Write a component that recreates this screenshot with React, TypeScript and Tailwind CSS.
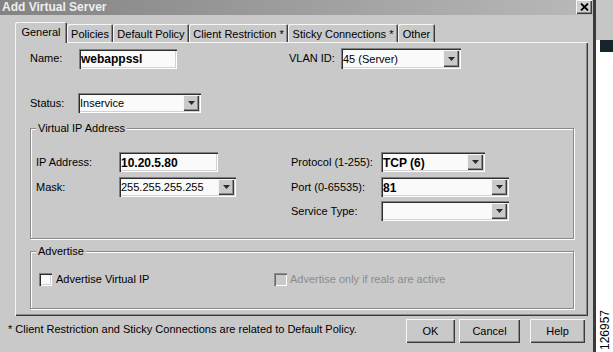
import React from "react";

const sunken =
  "shadow-[inset_1px_1px_0_#808080,inset_2px_2px_0_#2e2e2e,inset_-1px_-1px_0_#ffffff,inset_-2px_-2px_0_#d2d2d2]";
const raised =
  "shadow-[inset_1px_1px_0_#f6f6f6,inset_-1px_-1px_0_#3a3a3a,inset_-2px_-2px_0_#8a8a8a]";

function Arrow() {
  return (
    <div
      className={`w-[16px] h-full flex items-center justify-center bg-[#cacaca] ${raised}`}
    >
      <svg width="7" height="4" viewBox="0 0 7 4">
        <path d="M0 0h7L3.5 4z" fill="#2a2a2a" />
      </svg>
    </div>
  );
}

function TextField({ cls, value }: { cls: string; value: string }) {
  return (
    <div className={`${cls} flex items-center bg-[#fafafa] pl-[2px] pt-[1px] ${sunken}`}>
      <span className="font-bold text-[12px] leading-none">{value}</span>
    </div>
  );
}

function Select({ cls, value, bold }: { cls: string; value: string; bold?: boolean }) {
  return (
    <div className={`${cls} flex items-stretch bg-[#fafafa] p-[2px] ${sunken}`}>
      <div className="flex-1 flex items-center pt-[1px]">
        <span className={bold ? "font-bold text-[12px] leading-none" : "text-[11px] leading-none"}>
          {value}
        </span>
      </div>
      <Arrow />
    </div>
  );
}

function Tab({ label, cls, selected }: { label: string; cls: string; selected?: boolean }) {
  return (
    <div
      className={`${cls} flex justify-center rounded-t-[2px] bg-[#c9c9c9] shadow-[inset_1px_1px_0_#f6f6f6,inset_-1px_0_0_#3a3a3a,inset_-2px_0_0_#8a8a8a] ${
        selected ? "h-[21px] -mb-[1px] relative z-10 pt-[5px]" : "h-[18px] pt-[5px]"
      }`}
    >
      <span className="text-[11px] leading-[11px]">{label}</span>
    </div>
  );
}

function Group({
  legend,
  cls,
  children,
}: {
  legend: string;
  cls: string;
  children: React.ReactNode;
}) {
  return (
    <div
      className={`${cls} relative border border-[#8a8a8a] shadow-[inset_1px_1px_0_#ffffff,1px_1px_0_#ffffff]`}
    >
      <span className="absolute -top-[7px] left-[5px] px-[2px] bg-[#c9c9c9] text-[11px] leading-[13px]">
        {legend}
      </span>
      {children}
    </div>
  );
}

function Check({ disabled }: { disabled?: boolean }) {
  return (
    <div
      className={`w-[13px] h-[13px] ${
        disabled
          ? "bg-[#c9c9c9] shadow-[inset_1px_1px_0_#8a8a8a,inset_2px_2px_0_#6a6a6a,inset_-1px_-1px_0_#ffffff]"
          : `bg-[#fafafa] ${sunken}`
      }`}
    />
  );
}

export default function App() {
  return (
    <div className="w-[613px] h-[352px] flex overflow-hidden bg-white text-black [font-family:'Liberation_Sans',Arial,sans-serif]">
      {/* dialog */}
      <div className="w-[593px] h-full flex flex-col bg-[#c9c9c9]">
        {/* title bar */}
        <div className="h-[15px] flex items-start justify-between bg-linear-to-r from-[#838383] to-[#b9b9b9] pl-[2px] pr-[1px]">
          <span className="font-bold text-[12px] leading-[14px] text-[#eeeeee]">Add Virtual Server</span>
          <div
            className={`w-[16px] h-[14px] flex items-center justify-center bg-[#cfcfcf] ${raised}`}
          >
            <svg width="9" height="8" viewBox="0 0 9 8">
              <path d="M1 0.5L8 7.5M8 0.5L1 7.5" stroke="#000" strokeWidth="1.8" />
            </svg>
          </div>
        </div>

        {/* tabs */}
        <div className="h-[27px] pl-[15px] flex items-end">
          <Tab label="General" cls="w-[52px]" selected />
          <Tab label="Policies" cls="w-[46px]" />
          <Tab label="Default Policy" cls="w-[76px]" />
          <Tab label="Client Restriction *" cls="w-[99px]" />
          <Tab label="Sticky Connections *" cls="w-[110px]" />
          <Tab label="Other" cls="w-[37px]" />
        </div>

        {/* panel */}
        <div
          className={`ml-[15px] w-[573px] h-[274px] flex flex-col text-[11px] shadow-[inset_1px_1px_0_#f6f6f6,inset_-1px_-1px_0_#3a3a3a,inset_-2px_-2px_0_#8a8a8a]`}
        >
          {/* Name / VLAN */}
          <div className="mt-[6px] h-[21px] flex items-center">
            <span className="ml-[15px] w-[49px]">Name:</span>
            <TextField cls="w-[98px] h-[20px]" value="webappssl" />
            <span className="ml-[112px] w-[52px]">VLAN ID:</span>
            <Select cls="w-[120px] h-[21px]" value="45 (Server)" />
          </div>

          {/* Status */}
          <div className="mt-[24px] h-[20px] flex items-center">
            <span className="ml-[15px] w-[48px]">Status:</span>
            <Select cls="w-[123px] h-[20px]" value="Inservice" />
          </div>

          {/* VIP group */}
          <Group legend="Virtual IP Address" cls="mt-[15px] ml-[15px] w-[544px] h-[111px]">
            <div className="flex pt-[23px]">
              <div className="w-[260px] pl-[5px] flex flex-col">
                <div className="h-[20px] flex items-center">
                  <span className="w-[83px]">IP Address:</span>
                  <TextField cls="w-[99px] h-[20px]" value="10.20.5.80" />
                </div>
                <div className="mt-[5px] h-[20px] flex items-center">
                  <span className="w-[83px]">Mask:</span>
                  <Select cls="w-[117px] h-[20px]" value="255.255.255.255" />
                </div>
              </div>
              <div className="flex flex-col">
                <div className="h-[20px] flex items-center">
                  <span className="w-[90px]">Protocol (1-255):</span>
                  <Select cls="w-[104px] h-[20px]" value="TCP (6)" bold />
                </div>
                <div className="mt-[5px] h-[20px] flex items-center">
                  <span className="w-[90px]">Port (0-65535):</span>
                  <Select cls="w-[128px] h-[20px]" value="81" bold />
                </div>
                <div className="mt-[4px] h-[20px] flex items-center">
                  <span className="w-[90px]">Service Type:</span>
                  <Select cls="w-[128px] h-[20px]" value="" />
                </div>
              </div>
            </div>
          </Group>

          {/* Advertise group */}
          <Group legend="Advertise" cls="mt-[12px] ml-[15px] w-[544px] h-[58px]">
            <div className="flex items-center pt-[19px] pl-[8px]">
              <Check />
              <span className="ml-[4px] w-[218px]">Advertise Virtual IP</span>
              <Check disabled />
              <span className="ml-[3px] text-[#8c8c8c]">Advertise only if reals are active</span>
            </div>
          </Group>
        </div>

        {/* footer */}
        <div className="flex-1 flex items-start pt-[3px] pr-[8px]">
          <span className="flex-1 pl-[8px] pt-[4px] text-[11px] leading-[13px]">
            * Client Restriction and Sticky Connections are related to Default Policy.
          </span>
          <div className={`w-[49px] h-[24px] flex items-center justify-center text-[11px] bg-[#c9c9c9] ${raised}`}>
            OK
          </div>
          <div
            className={`ml-[4px] w-[61px] h-[24px] flex items-center justify-center text-[11px] bg-[#c9c9c9] ${raised}`}
          >
            Cancel
          </div>
          <div
            className={`ml-[10px] w-[55px] h-[24px] flex items-center justify-center text-[11px] bg-[#c9c9c9] ${raised}`}
          >
            Help
          </div>
        </div>
      </div>

      {/* window edge */}
      <div className="w-[3px] h-full bg-[#3a3a3a]" />

      {/* right strip */}
      <div className="w-[17px] h-full flex flex-col bg-white">
        <div className="h-[40px] bg-[#c6c6c6]" />
        <div className="h-[12px] ml-[4px] bg-[#17242a]" />
        <div className="flex-1 flex items-end justify-center pb-[2px]">
          <span className="[writing-mode:vertical-rl] rotate-180 text-[12px] leading-[12px]">126957</span>
        </div>
      </div>
    </div>
  );
}
